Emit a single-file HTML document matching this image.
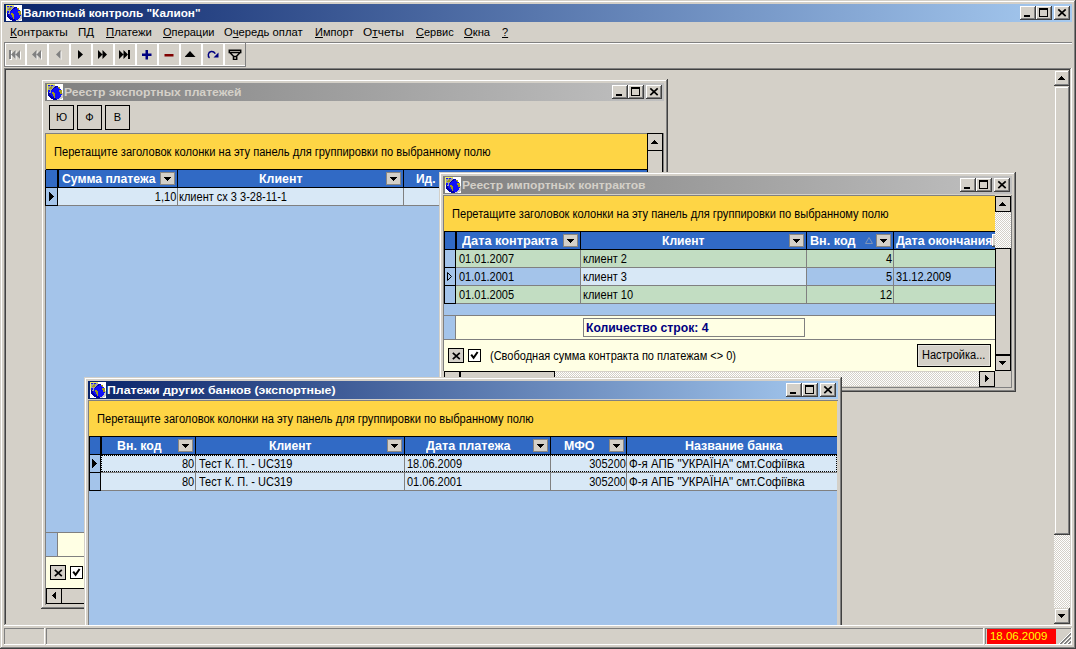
<!DOCTYPE html>
<html><head><meta charset="utf-8"><style>
html,body{margin:0;padding:0;width:1076px;height:649px;overflow:hidden;background:#D4D0C8}
body{position:relative;font-family:"Liberation Sans",sans-serif;font-size:11px}
div,svg{position:absolute}
.t{line-height:13px;white-space:nowrap}
#mdi{left:0;top:0;width:1076px;height:649px;clip-path:inset(70px 22px 24px 6px)}
</style></head><body>
<div style="left:0px;top:0px;width:1076px;height:649px;background:#D4D0C8;"></div>
<div style="left:1px;top:1px;width:1073px;height:1px;background:#FFFFFF;"></div>
<div style="left:1px;top:1px;width:1px;height:646px;background:#FFFFFF;"></div>
<div style="left:0px;top:648px;width:1076px;height:1px;background:#404040;"></div>
<div style="left:1075px;top:0px;width:1px;height:649px;background:#404040;"></div>
<div style="left:1px;top:647px;width:1074px;height:1px;background:#808080;"></div>
<div style="left:1074px;top:1px;width:1px;height:647px;background:#808080;"></div>
<div style="left:4px;top:4px;width:1068px;height:18px;background:linear-gradient(to right,#0A246A,#A6CAF0);"></div>
<svg style="left:6px;top:5px" width="16" height="16" viewBox="0 0 16 16" shape-rendering="crispEdges"><rect x="0" y="0" width="8" height="1" fill="#F0F060"/><rect x="8" y="0" width="8" height="1" fill="#FFFFFF"/><rect x="0" y="1" width="1" height="1" fill="#F0F060"/><rect x="1" y="1" width="2" height="1" fill="#1010F8"/><rect x="3" y="1" width="1" height="1" fill="#A0A0A0"/><rect x="4" y="1" width="2" height="1" fill="#1010F8"/><rect x="6" y="1" width="2" height="1" fill="#A0A0A0"/><rect x="8" y="1" width="8" height="1" fill="#FFFFFF"/><rect x="0" y="2" width="1" height="1" fill="#F0F060"/><rect x="1" y="2" width="3" height="1" fill="#A0A0A0"/><rect x="4" y="2" width="1" height="1" fill="#A09A18"/><rect x="5" y="2" width="3" height="1" fill="#A0A0A0"/><rect x="8" y="2" width="3" height="1" fill="#0000A8"/><rect x="11" y="2" width="5" height="1" fill="#FFFFFF"/><rect x="0" y="3" width="1" height="1" fill="#F0F060"/><rect x="1" y="3" width="2" height="1" fill="#A0A0A0"/><rect x="3" y="3" width="2" height="1" fill="#A09A18"/><rect x="5" y="3" width="2" height="1" fill="#A0A0A0"/><rect x="7" y="3" width="2" height="1" fill="#0000A8"/><rect x="9" y="3" width="2" height="1" fill="#1010F8"/><rect x="11" y="3" width="2" height="1" fill="#A09A18"/><rect x="13" y="3" width="3" height="1" fill="#FFFFFF"/><rect x="0" y="4" width="1" height="1" fill="#F0F060"/><rect x="1" y="4" width="1" height="1" fill="#A0A0A0"/><rect x="2" y="4" width="3" height="1" fill="#A09A18"/><rect x="5" y="4" width="1" height="1" fill="#A0A0A0"/><rect x="6" y="4" width="1" height="1" fill="#0000A8"/><rect x="7" y="4" width="5" height="1" fill="#1010F8"/><rect x="12" y="4" width="1" height="1" fill="#A09A18"/><rect x="13" y="4" width="3" height="1" fill="#FFFFFF"/><rect x="0" y="5" width="1" height="1" fill="#F0F060"/><rect x="1" y="5" width="4" height="1" fill="#A0A0A0"/><rect x="5" y="5" width="1" height="1" fill="#0000A8"/><rect x="6" y="5" width="8" height="1" fill="#1010F8"/><rect x="14" y="5" width="2" height="1" fill="#FFFFFF"/><rect x="0" y="6" width="1" height="1" fill="#F0F060"/><rect x="1" y="6" width="2" height="1" fill="#1010F8"/><rect x="3" y="6" width="1" height="1" fill="#A0A0A0"/><rect x="4" y="6" width="8" height="1" fill="#1010F8"/><rect x="12" y="6" width="3" height="1" fill="#A09A18"/><rect x="15" y="6" width="1" height="1" fill="#FFFFFF"/><rect x="0" y="7" width="1" height="1" fill="#F0F060"/><rect x="1" y="7" width="2" height="1" fill="#1010F8"/><rect x="3" y="7" width="1" height="1" fill="#A0A0A0"/><rect x="4" y="7" width="8" height="1" fill="#1010F8"/><rect x="12" y="7" width="3" height="1" fill="#A09A18"/><rect x="15" y="7" width="1" height="1" fill="#FFFFFF"/><rect x="0" y="8" width="1" height="1" fill="#FFFFFF"/><rect x="1" y="8" width="1" height="1" fill="#0000A8"/><rect x="2" y="8" width="2" height="1" fill="#A0A0A0"/><rect x="4" y="8" width="1" height="1" fill="#1010F8"/><rect x="5" y="8" width="2" height="1" fill="#A09A18"/><rect x="7" y="8" width="6" height="1" fill="#1010F8"/><rect x="13" y="8" width="2" height="1" fill="#A09A18"/><rect x="15" y="8" width="1" height="1" fill="#FFFFFF"/><rect x="0" y="9" width="1" height="1" fill="#FFFFFF"/><rect x="1" y="9" width="2" height="1" fill="#0000A8"/><rect x="3" y="9" width="2" height="1" fill="#1010F8"/><rect x="5" y="9" width="3" height="1" fill="#A09A18"/><rect x="8" y="9" width="5" height="1" fill="#1010F8"/><rect x="13" y="9" width="2" height="1" fill="#A09A18"/><rect x="15" y="9" width="1" height="1" fill="#C8C8C8"/><rect x="0" y="10" width="1" height="1" fill="#FFFFFF"/><rect x="1" y="10" width="2" height="1" fill="#0000A8"/><rect x="3" y="10" width="3" height="1" fill="#1010F8"/><rect x="6" y="10" width="2" height="1" fill="#A09A18"/><rect x="8" y="10" width="7" height="1" fill="#1010F8"/><rect x="15" y="10" width="1" height="1" fill="#C8C8C8"/><rect x="0" y="11" width="1" height="1" fill="#FFFFFF"/><rect x="1" y="11" width="3" height="1" fill="#0000A8"/><rect x="4" y="11" width="2" height="1" fill="#1010F8"/><rect x="6" y="11" width="2" height="1" fill="#A09A18"/><rect x="8" y="11" width="6" height="1" fill="#1010F8"/><rect x="14" y="11" width="2" height="1" fill="#C8C8C8"/><rect x="0" y="12" width="2" height="1" fill="#FFFFFF"/><rect x="2" y="12" width="3" height="1" fill="#0000A8"/><rect x="5" y="12" width="2" height="1" fill="#1010F8"/><rect x="7" y="12" width="1" height="1" fill="#A09A18"/><rect x="8" y="12" width="6" height="1" fill="#1010F8"/><rect x="14" y="12" width="2" height="1" fill="#C8C8C8"/><rect x="0" y="13" width="3" height="1" fill="#FFFFFF"/><rect x="3" y="13" width="4" height="1" fill="#0000A8"/><rect x="7" y="13" width="1" height="1" fill="#A09A18"/><rect x="8" y="13" width="5" height="1" fill="#1010F8"/><rect x="13" y="13" width="3" height="1" fill="#C8C8C8"/><rect x="0" y="14" width="4" height="1" fill="#FFFFFF"/><rect x="4" y="14" width="5" height="1" fill="#0000A8"/><rect x="9" y="14" width="3" height="1" fill="#1010F8"/><rect x="12" y="14" width="3" height="1" fill="#C8C8C8"/><rect x="15" y="14" width="1" height="1" fill="#FFFFFF"/><rect x="0" y="15" width="6" height="1" fill="#FFFFFF"/><rect x="6" y="15" width="4" height="1" fill="#0000A8"/><rect x="10" y="15" width="3" height="1" fill="#C8C8C8"/><rect x="13" y="15" width="3" height="1" fill="#FFFFFF"/></svg>
<div class="t" style="left:23.14px;top:7px;color:#FFFFFF;font-weight:bold;transform:scaleX(1.0692);transform-origin:0 0;">Валютный контроль "Калион"</div>
<div style="left:1020px;top:6px;width:16px;height:14px;background:#D4D0C8;"></div>
<div style="left:1020px;top:6px;width:15px;height:1px;background:#FFFFFF;"></div>
<div style="left:1020px;top:6px;width:1px;height:13px;background:#FFFFFF;"></div>
<div style="left:1020px;top:19px;width:16px;height:1px;background:#404040;"></div>
<div style="left:1035px;top:6px;width:1px;height:14px;background:#404040;"></div>
<div style="left:1021px;top:18px;width:14px;height:1px;background:#808080;"></div>
<div style="left:1034px;top:7px;width:1px;height:12px;background:#808080;"></div>
<div style="left:1024px;top:15px;width:6px;height:2px;background:#000;"></div>
<div style="left:1036px;top:6px;width:16px;height:14px;background:#D4D0C8;"></div>
<div style="left:1036px;top:6px;width:15px;height:1px;background:#FFFFFF;"></div>
<div style="left:1036px;top:6px;width:1px;height:13px;background:#FFFFFF;"></div>
<div style="left:1036px;top:19px;width:16px;height:1px;background:#404040;"></div>
<div style="left:1051px;top:6px;width:1px;height:14px;background:#404040;"></div>
<div style="left:1037px;top:18px;width:14px;height:1px;background:#808080;"></div>
<div style="left:1050px;top:7px;width:1px;height:12px;background:#808080;"></div>
<div style="left:1039px;top:8px;width:9px;height:9px;border:1px solid #000;border-top-width:2px;box-sizing:border-box"></div>
<div style="left:1054px;top:6px;width:16px;height:14px;background:#D4D0C8;"></div>
<div style="left:1054px;top:6px;width:15px;height:1px;background:#FFFFFF;"></div>
<div style="left:1054px;top:6px;width:1px;height:13px;background:#FFFFFF;"></div>
<div style="left:1054px;top:19px;width:16px;height:1px;background:#404040;"></div>
<div style="left:1069px;top:6px;width:1px;height:14px;background:#404040;"></div>
<div style="left:1055px;top:18px;width:14px;height:1px;background:#808080;"></div>
<div style="left:1068px;top:7px;width:1px;height:12px;background:#808080;"></div>
<svg style="left:1057px;top:8px" width="10" height="9" viewBox="0 0 10 9"><path d="M1.3 1.3L8.7 8.2M8.7 1.3L1.3 8.2" stroke="#000" stroke-width="1.7"/></svg>
<div class="t" style="left:10px;top:26px;color:#000;transform:scaleX(1.075);transform-origin:0 0;"><u>К</u>онтракты</div>
<div class="t" style="left:78px;top:26px;color:#000;transform:scaleX(1.05);transform-origin:0 0;">П<u>Д</u></div>
<div class="t" style="left:106px;top:26px;color:#000;transform:scaleX(1.03);transform-origin:0 0;"><u>П</u>латежи</div>
<div class="t" style="left:163px;top:26px;color:#000;"><u>О</u>перации</div>
<div class="t" style="left:224px;top:26px;color:#000;transform:scaleX(1.02);transform-origin:0 0;">О<u>ч</u>ередь оплат</div>
<div class="t" style="left:315px;top:26px;color:#000;"><u>И</u>мпорт</div>
<div class="t" style="left:363px;top:26px;color:#000;transform:scaleX(1.08);transform-origin:0 0;">О<u>т</u>четы</div>
<div class="t" style="left:416px;top:26px;color:#000;"><u>С</u>ервис</div>
<div class="t" style="left:464px;top:26px;color:#000;transform:scaleX(1.02);transform-origin:0 0;"><u>О</u>кна</div>
<div class="t" style="left:502px;top:26px;color:#000;"><u>?</u></div>
<div style="left:4px;top:42px;width:1068px;height:1px;background:#808080;"></div>
<div style="left:4px;top:43px;width:1068px;height:1px;background:#FFFFFF;"></div>
<div style="left:4px;top:42px;width:242px;height:25px;background:#808080;"></div>
<div style="left:5px;top:43px;width:240px;height:23px;background:#FFFFFF;"></div>
<div style="left:6px;top:44px;width:19px;height:21px;background:#D4D0C8;"></div>
<div style="left:27px;top:44px;width:20px;height:21px;background:#D4D0C8;"></div>
<div style="left:49px;top:44px;width:20px;height:21px;background:#D4D0C8;"></div>
<div style="left:71px;top:44px;width:20px;height:21px;background:#D4D0C8;"></div>
<div style="left:93px;top:44px;width:20px;height:21px;background:#D4D0C8;"></div>
<div style="left:115px;top:44px;width:20px;height:21px;background:#D4D0C8;"></div>
<div style="left:137px;top:44px;width:20px;height:21px;background:#D4D0C8;"></div>
<div style="left:159px;top:44px;width:20px;height:21px;background:#D4D0C8;"></div>
<div style="left:181px;top:44px;width:20px;height:21px;background:#D4D0C8;"></div>
<div style="left:203px;top:44px;width:20px;height:21px;background:#D4D0C8;"></div>
<div style="left:225px;top:44px;width:20px;height:21px;background:#D4D0C8;"></div>
<svg style="left:9px;top:50px" width="13" height="11" viewBox="0 0 13 11"><path transform="translate(1,1)" d="M0 0h2v9h-2zM2 4.5L6.5 0V9zM6.5 4.5L11 0V9z" fill="#fff"/><path d="M0 0h2v9h-2zM2 4.5L6.5 0V9zM6.5 4.5L11 0V9z" fill="#808080"/></svg>
<svg style="left:32px;top:50px" width="12" height="11" viewBox="0 0 12 11"><path transform="translate(1,1)" d="M0 4.5L4.5 0V9zM4.5 4.5L9 0V9z" fill="#fff"/><path d="M0 4.5L4.5 0V9zM4.5 4.5L9 0V9z" fill="#808080"/></svg>
<svg style="left:56px;top:50px" width="8" height="11" viewBox="0 0 8 11"><path transform="translate(1,1)" d="M0 4.5L4.5 0V9z" fill="#fff"/><path d="M0 4.5L4.5 0V9z" fill="#808080"/></svg>
<svg style="left:78px;top:50px" width="8" height="11" viewBox="0 0 8 11"><path d="M0 0L5 4.5L0 9z" fill="#000"/></svg>
<svg style="left:98px;top:50px" width="12" height="11" viewBox="0 0 12 11"><path d="M0 0L4.5 4.5L0 9zM4.5 0L9 4.5L4.5 9z" fill="#000"/></svg>
<svg style="left:119px;top:50px" width="12" height="11" viewBox="0 0 12 11"><path d="M0 0L4.5 4.5L0 9zM4.5 0L9 4.5L4.5 9zM9 0h2v9h-2z" fill="#000"/></svg>
<svg style="left:142px;top:50px" width="10" height="10" viewBox="0 0 10 10"><path d="M3.5 0h2.5v3.5h3.5v2.5h-3.5v3.5h-2.5v-3.5h-3.5v-2.5h3.5z" fill="#000080"/></svg>
<svg style="left:164px;top:53px" width="10" height="4" viewBox="0 0 10 4"><path d="M0.5 1h9v2.5h-9z" fill="#800000"/></svg>
<svg style="left:185px;top:51px" width="11" height="7" viewBox="0 0 11 7"><path d="M5 0L10.5 6h-11z" fill="#000"/></svg>
<svg style="left:207px;top:50px" width="12" height="9" viewBox="0 0 12 9"><path d="M2.5 7.8C0.6 6.5 0.8 2.2 4.2 1.6C6 1.3 7.3 2.2 8.3 3.6" fill="none" stroke="#000080" stroke-width="1.5"/></svg>
<svg style="left:212px;top:52px" width="7" height="6" viewBox="0 0 7 6"><path d="M6.5 0.5v5h-5z" fill="#000080"/></svg>
<svg style="left:228px;top:49px" width="14" height="11" viewBox="0 0 14 11"><path d="M1.3 1.3h11.4v2.2h-11.4zM1.8 3.5l4.2 4.2M12.2 3.5l-4.2 4.2M5.5 7.5h3.2v3h-3.2z" fill="none" stroke="#000" stroke-width="1.5"/></svg>
<div style="left:4px;top:68px;width:1068px;height:558px;background:#D4D0C8;"></div>
<div style="left:4px;top:68px;width:1067px;height:1px;background:#808080;"></div>
<div style="left:4px;top:68px;width:1px;height:557px;background:#808080;"></div>
<div style="left:5px;top:69px;width:1065px;height:1px;background:#404040;"></div>
<div style="left:5px;top:69px;width:1px;height:555px;background:#404040;"></div>
<div style="left:4px;top:625px;width:1068px;height:1px;background:#FFFFFF;"></div>
<div style="left:1071px;top:68px;width:1px;height:558px;background:#FFFFFF;"></div>
<div style="left:1054px;top:70px;width:16px;height:555px;background:#D4D0C8;"></div>
<div style="left:1054px;top:70px;width:16px;height:16px;background:#D4D0C8;"></div>
<div style="left:1055px;top:71px;width:13px;height:1px;background:#FFFFFF;"></div>
<div style="left:1055px;top:71px;width:1px;height:13px;background:#FFFFFF;"></div>
<div style="left:1054px;top:85px;width:16px;height:1px;background:#404040;"></div>
<div style="left:1069px;top:70px;width:1px;height:16px;background:#404040;"></div>
<div style="left:1055px;top:84px;width:14px;height:1px;background:#808080;"></div>
<div style="left:1068px;top:71px;width:1px;height:14px;background:#808080;"></div>
<svg style="left:1058px;top:76px" width="7" height="4" viewBox="0 0 7 4" shape-rendering="crispEdges"><path d="M3 0h1v1h1v1h1v1h1v1h-7v-1h1v-1h1v-1h1z" fill="#000"/></svg>
<div style="left:1054px;top:86px;width:16px;height:449px;background:#D4D0C8;"></div>
<div style="left:1055px;top:87px;width:13px;height:1px;background:#FFFFFF;"></div>
<div style="left:1055px;top:87px;width:1px;height:446px;background:#FFFFFF;"></div>
<div style="left:1054px;top:534px;width:16px;height:1px;background:#404040;"></div>
<div style="left:1069px;top:86px;width:1px;height:449px;background:#404040;"></div>
<div style="left:1055px;top:533px;width:14px;height:1px;background:#808080;"></div>
<div style="left:1068px;top:87px;width:1px;height:447px;background:#808080;"></div>
<div style="left:1054px;top:535px;width:16px;height:73px;background:#fff;background-image:repeating-conic-gradient(#D4D0C8 0 25%, #fff 0 50%);background-size:2px 2px;"></div>
<div style="left:1054px;top:608px;width:16px;height:16px;background:#D4D0C8;"></div>
<div style="left:1055px;top:609px;width:13px;height:1px;background:#FFFFFF;"></div>
<div style="left:1055px;top:609px;width:1px;height:13px;background:#FFFFFF;"></div>
<div style="left:1054px;top:623px;width:16px;height:1px;background:#404040;"></div>
<div style="left:1069px;top:608px;width:1px;height:16px;background:#404040;"></div>
<div style="left:1055px;top:622px;width:14px;height:1px;background:#808080;"></div>
<div style="left:1068px;top:609px;width:1px;height:14px;background:#808080;"></div>
<svg style="left:1058px;top:614px" width="7" height="4" viewBox="0 0 7 4" shape-rendering="crispEdges"><path d="M0 0h7v1h-1v1h-1v1h-1v1h-1v-1h-1v-1h-1v-1h-1z" fill="#000"/></svg>
<div style="left:4px;top:628px;width:41px;height:17px;background:#D4D0C8;"></div>
<div style="left:4px;top:628px;width:41px;height:1px;background:#808080;"></div>
<div style="left:4px;top:628px;width:1px;height:17px;background:#808080;"></div>
<div style="left:4px;top:644px;width:41px;height:1px;background:#FFFFFF;"></div>
<div style="left:44px;top:628px;width:1px;height:17px;background:#FFFFFF;"></div>
<div style="left:46px;top:628px;width:938px;height:17px;background:#D4D0C8;"></div>
<div style="left:46px;top:628px;width:938px;height:1px;background:#808080;"></div>
<div style="left:46px;top:628px;width:1px;height:17px;background:#808080;"></div>
<div style="left:46px;top:644px;width:938px;height:1px;background:#FFFFFF;"></div>
<div style="left:983px;top:628px;width:1px;height:17px;background:#FFFFFF;"></div>
<div style="left:985px;top:628px;width:87px;height:17px;background:#D4D0C8;"></div>
<div style="left:985px;top:628px;width:87px;height:1px;background:#808080;"></div>
<div style="left:985px;top:628px;width:1px;height:17px;background:#808080;"></div>
<div style="left:985px;top:644px;width:87px;height:1px;background:#FFFFFF;"></div>
<div style="left:1071px;top:628px;width:1px;height:17px;background:#FFFFFF;"></div>
<div style="left:987px;top:629px;width:69px;height:15px;background:#FF0000;"></div>
<div class="t" style="left:990px;top:630px;color:#FFFF00;transform:scaleX(1.04);transform-origin:0 0;">18.06.2009</div>
<svg style="left:1059px;top:632px" width="13" height="13" viewBox="0 0 13 13"><path d="M12 0L0 12M12 4L4 12M12 8L8 12" stroke="#fff" stroke-width="1"/><path d="M12 1L1 12M12 2L2 12M12 5L5 12M12 6L6 12M12 9L9 12M12 10L10 12" stroke="#808080" stroke-width="1"/></svg>
<div id="mdi">
<div style="left:41px;top:79px;width:627px;height:530px;background:#D4D0C8;"></div>
<div style="left:42px;top:80px;width:624px;height:1px;background:#FFFFFF;"></div>
<div style="left:42px;top:80px;width:1px;height:527px;background:#FFFFFF;"></div>
<div style="left:41px;top:608px;width:627px;height:1px;background:#404040;"></div>
<div style="left:667px;top:79px;width:1px;height:530px;background:#404040;"></div>
<div style="left:42px;top:607px;width:625px;height:1px;background:#808080;"></div>
<div style="left:666px;top:80px;width:1px;height:528px;background:#808080;"></div>
<div style="left:45px;top:83px;width:619px;height:18px;background:linear-gradient(to right,#808080,#C0C0C0);"></div>
<svg style="left:47px;top:84px" width="16" height="16" viewBox="0 0 16 16" shape-rendering="crispEdges"><rect x="0" y="0" width="8" height="1" fill="#F0F060"/><rect x="8" y="0" width="8" height="1" fill="#FFFFFF"/><rect x="0" y="1" width="1" height="1" fill="#F0F060"/><rect x="1" y="1" width="2" height="1" fill="#1010F8"/><rect x="3" y="1" width="1" height="1" fill="#A0A0A0"/><rect x="4" y="1" width="2" height="1" fill="#1010F8"/><rect x="6" y="1" width="2" height="1" fill="#A0A0A0"/><rect x="8" y="1" width="8" height="1" fill="#FFFFFF"/><rect x="0" y="2" width="1" height="1" fill="#F0F060"/><rect x="1" y="2" width="3" height="1" fill="#A0A0A0"/><rect x="4" y="2" width="1" height="1" fill="#A09A18"/><rect x="5" y="2" width="3" height="1" fill="#A0A0A0"/><rect x="8" y="2" width="3" height="1" fill="#0000A8"/><rect x="11" y="2" width="5" height="1" fill="#FFFFFF"/><rect x="0" y="3" width="1" height="1" fill="#F0F060"/><rect x="1" y="3" width="2" height="1" fill="#A0A0A0"/><rect x="3" y="3" width="2" height="1" fill="#A09A18"/><rect x="5" y="3" width="2" height="1" fill="#A0A0A0"/><rect x="7" y="3" width="2" height="1" fill="#0000A8"/><rect x="9" y="3" width="2" height="1" fill="#1010F8"/><rect x="11" y="3" width="2" height="1" fill="#A09A18"/><rect x="13" y="3" width="3" height="1" fill="#FFFFFF"/><rect x="0" y="4" width="1" height="1" fill="#F0F060"/><rect x="1" y="4" width="1" height="1" fill="#A0A0A0"/><rect x="2" y="4" width="3" height="1" fill="#A09A18"/><rect x="5" y="4" width="1" height="1" fill="#A0A0A0"/><rect x="6" y="4" width="1" height="1" fill="#0000A8"/><rect x="7" y="4" width="5" height="1" fill="#1010F8"/><rect x="12" y="4" width="1" height="1" fill="#A09A18"/><rect x="13" y="4" width="3" height="1" fill="#FFFFFF"/><rect x="0" y="5" width="1" height="1" fill="#F0F060"/><rect x="1" y="5" width="4" height="1" fill="#A0A0A0"/><rect x="5" y="5" width="1" height="1" fill="#0000A8"/><rect x="6" y="5" width="8" height="1" fill="#1010F8"/><rect x="14" y="5" width="2" height="1" fill="#FFFFFF"/><rect x="0" y="6" width="1" height="1" fill="#F0F060"/><rect x="1" y="6" width="2" height="1" fill="#1010F8"/><rect x="3" y="6" width="1" height="1" fill="#A0A0A0"/><rect x="4" y="6" width="8" height="1" fill="#1010F8"/><rect x="12" y="6" width="3" height="1" fill="#A09A18"/><rect x="15" y="6" width="1" height="1" fill="#FFFFFF"/><rect x="0" y="7" width="1" height="1" fill="#F0F060"/><rect x="1" y="7" width="2" height="1" fill="#1010F8"/><rect x="3" y="7" width="1" height="1" fill="#A0A0A0"/><rect x="4" y="7" width="8" height="1" fill="#1010F8"/><rect x="12" y="7" width="3" height="1" fill="#A09A18"/><rect x="15" y="7" width="1" height="1" fill="#FFFFFF"/><rect x="0" y="8" width="1" height="1" fill="#FFFFFF"/><rect x="1" y="8" width="1" height="1" fill="#0000A8"/><rect x="2" y="8" width="2" height="1" fill="#A0A0A0"/><rect x="4" y="8" width="1" height="1" fill="#1010F8"/><rect x="5" y="8" width="2" height="1" fill="#A09A18"/><rect x="7" y="8" width="6" height="1" fill="#1010F8"/><rect x="13" y="8" width="2" height="1" fill="#A09A18"/><rect x="15" y="8" width="1" height="1" fill="#FFFFFF"/><rect x="0" y="9" width="1" height="1" fill="#FFFFFF"/><rect x="1" y="9" width="2" height="1" fill="#0000A8"/><rect x="3" y="9" width="2" height="1" fill="#1010F8"/><rect x="5" y="9" width="3" height="1" fill="#A09A18"/><rect x="8" y="9" width="5" height="1" fill="#1010F8"/><rect x="13" y="9" width="2" height="1" fill="#A09A18"/><rect x="15" y="9" width="1" height="1" fill="#C8C8C8"/><rect x="0" y="10" width="1" height="1" fill="#FFFFFF"/><rect x="1" y="10" width="2" height="1" fill="#0000A8"/><rect x="3" y="10" width="3" height="1" fill="#1010F8"/><rect x="6" y="10" width="2" height="1" fill="#A09A18"/><rect x="8" y="10" width="7" height="1" fill="#1010F8"/><rect x="15" y="10" width="1" height="1" fill="#C8C8C8"/><rect x="0" y="11" width="1" height="1" fill="#FFFFFF"/><rect x="1" y="11" width="3" height="1" fill="#0000A8"/><rect x="4" y="11" width="2" height="1" fill="#1010F8"/><rect x="6" y="11" width="2" height="1" fill="#A09A18"/><rect x="8" y="11" width="6" height="1" fill="#1010F8"/><rect x="14" y="11" width="2" height="1" fill="#C8C8C8"/><rect x="0" y="12" width="2" height="1" fill="#FFFFFF"/><rect x="2" y="12" width="3" height="1" fill="#0000A8"/><rect x="5" y="12" width="2" height="1" fill="#1010F8"/><rect x="7" y="12" width="1" height="1" fill="#A09A18"/><rect x="8" y="12" width="6" height="1" fill="#1010F8"/><rect x="14" y="12" width="2" height="1" fill="#C8C8C8"/><rect x="0" y="13" width="3" height="1" fill="#FFFFFF"/><rect x="3" y="13" width="4" height="1" fill="#0000A8"/><rect x="7" y="13" width="1" height="1" fill="#A09A18"/><rect x="8" y="13" width="5" height="1" fill="#1010F8"/><rect x="13" y="13" width="3" height="1" fill="#C8C8C8"/><rect x="0" y="14" width="4" height="1" fill="#FFFFFF"/><rect x="4" y="14" width="5" height="1" fill="#0000A8"/><rect x="9" y="14" width="3" height="1" fill="#1010F8"/><rect x="12" y="14" width="3" height="1" fill="#C8C8C8"/><rect x="15" y="14" width="1" height="1" fill="#FFFFFF"/><rect x="0" y="15" width="6" height="1" fill="#FFFFFF"/><rect x="6" y="15" width="4" height="1" fill="#0000A8"/><rect x="10" y="15" width="3" height="1" fill="#C8C8C8"/><rect x="13" y="15" width="3" height="1" fill="#FFFFFF"/></svg>
<div class="t" style="left:64.11px;top:86px;color:#D4D0C8;font-weight:bold;transform:scaleX(1.1082);transform-origin:0 0;">Реестр экспортных платежей</div>
<div style="left:612px;top:85px;width:16px;height:14px;background:#D4D0C8;"></div>
<div style="left:612px;top:85px;width:15px;height:1px;background:#FFFFFF;"></div>
<div style="left:612px;top:85px;width:1px;height:13px;background:#FFFFFF;"></div>
<div style="left:612px;top:98px;width:16px;height:1px;background:#404040;"></div>
<div style="left:627px;top:85px;width:1px;height:14px;background:#404040;"></div>
<div style="left:613px;top:97px;width:14px;height:1px;background:#808080;"></div>
<div style="left:626px;top:86px;width:1px;height:12px;background:#808080;"></div>
<div style="left:616px;top:94px;width:6px;height:2px;background:#000;"></div>
<div style="left:628px;top:85px;width:16px;height:14px;background:#D4D0C8;"></div>
<div style="left:628px;top:85px;width:15px;height:1px;background:#FFFFFF;"></div>
<div style="left:628px;top:85px;width:1px;height:13px;background:#FFFFFF;"></div>
<div style="left:628px;top:98px;width:16px;height:1px;background:#404040;"></div>
<div style="left:643px;top:85px;width:1px;height:14px;background:#404040;"></div>
<div style="left:629px;top:97px;width:14px;height:1px;background:#808080;"></div>
<div style="left:642px;top:86px;width:1px;height:12px;background:#808080;"></div>
<div style="left:631px;top:87px;width:9px;height:9px;border:1px solid #000;border-top-width:2px;box-sizing:border-box"></div>
<div style="left:646px;top:85px;width:16px;height:14px;background:#D4D0C8;"></div>
<div style="left:646px;top:85px;width:15px;height:1px;background:#FFFFFF;"></div>
<div style="left:646px;top:85px;width:1px;height:13px;background:#FFFFFF;"></div>
<div style="left:646px;top:98px;width:16px;height:1px;background:#404040;"></div>
<div style="left:661px;top:85px;width:1px;height:14px;background:#404040;"></div>
<div style="left:647px;top:97px;width:14px;height:1px;background:#808080;"></div>
<div style="left:660px;top:86px;width:1px;height:12px;background:#808080;"></div>
<svg style="left:649px;top:87px" width="10" height="9" viewBox="0 0 10 9"><path d="M1.3 1.3L8.7 8.2M8.7 1.3L1.3 8.2" stroke="#000" stroke-width="1.7"/></svg>
<div style="left:49px;top:105px;width:25px;height:25px;background:#D4D0C8;box-shadow: inset 0 0 0 1px #000;"></div>
<div class="t" style="left:49px;top:111px;color:#000;width:25px;text-align:center;">Ю</div>
<div style="left:77px;top:105px;width:25px;height:25px;background:#D4D0C8;box-shadow: inset 0 0 0 1px #000;"></div>
<div class="t" style="left:77px;top:111px;color:#000;width:25px;text-align:center;">Ф</div>
<div style="left:105px;top:105px;width:25px;height:25px;background:#D4D0C8;box-shadow: inset 0 0 0 1px #000;"></div>
<div class="t" style="left:105px;top:111px;color:#000;width:25px;text-align:center;">В</div>
<div style="left:45px;top:133px;width:602px;height:1px;background:#808080;"></div>
<div style="left:45px;top:133px;width:1px;height:472px;background:#808080;"></div>
<div style="left:46px;top:134px;width:601px;height:35px;background:#FED545;"></div>
<div class="t" style="left:54px;top:146px;color:#000;font-size:12px;transform:scaleX(0.9255);transform-origin:0 0;">Перетащите заголовок колонки на эту панель для группировки по выбранному полю</div>
<div style="left:46px;top:169px;width:601px;height:1px;background:#000;"></div>
<div style="left:46px;top:170px;width:601px;height:17px;background:#316AC5;"></div>
<div style="left:57px;top:170px;width:2px;height:17px;background:#000;"></div>
<div style="left:46px;top:187px;width:601px;height:1px;background:#000;"></div>
<div style="left:45px;top:170px;width:1px;height:36px;background:#000;"></div>
<div class="t" style="left:62.19px;top:173px;color:#fff;font-size:12px;font-weight:bold;transform:scaleX(1.0156);transform-origin:0 0;">Сумма платежа</div>
<div style="left:160px;top:172px;width:15px;height:13px;background:#D4D0C8;box-shadow: inset 0 0 0 1px #8A8680;"></div>
<svg style="left:164px;top:177px" width="7" height="4" viewBox="0 0 7 4" shape-rendering="crispEdges"><path d="M0 0h7v1h-1v1h-1v1h-1v1h-1v-1h-1v-1h-1v-1h-1z" fill="#000"/></svg>
<div style="left:177px;top:170px;width:1px;height:17px;background:#000;"></div>
<div class="t" style="left:259.17px;top:173px;color:#fff;font-size:12px;font-weight:bold;transform:scaleX(1.0326);transform-origin:0 0;">Клиент</div>
<div style="left:386px;top:172px;width:15px;height:13px;background:#D4D0C8;box-shadow: inset 0 0 0 1px #8A8680;"></div>
<svg style="left:390px;top:177px" width="7" height="4" viewBox="0 0 7 4" shape-rendering="crispEdges"><path d="M0 0h7v1h-1v1h-1v1h-1v1h-1v-1h-1v-1h-1v-1h-1z" fill="#000"/></svg>
<div style="left:403px;top:170px;width:1px;height:17px;background:#000;"></div>
<div class="t" style="left:416.2px;top:173px;color:#fff;font-size:12px;font-weight:bold;transform:scaleX(0.996);transform-origin:0 0;">Ид.</div>
<div style="left:46px;top:188px;width:11px;height:17px;background:#A4C4EA;"></div>
<div style="left:57px;top:188px;width:1px;height:18px;background:#000;"></div>
<div style="left:58px;top:188px;width:589px;height:17px;background:#D8E8F6;"></div>
<div style="left:46px;top:205px;width:601px;height:1px;background:#808080;"></div>
<div style="left:45px;top:205px;width:13px;height:1px;background:#000;"></div>
<div style="left:177px;top:188px;width:1px;height:17px;background:#808080;"></div>
<div style="left:403px;top:188px;width:1px;height:17px;background:#808080;"></div>
<svg style="left:49px;top:192px" width="5" height="9" viewBox="0 0 5 9" shape-rendering="crispEdges"><path d="M0 0v9h1v-1h1v-1h1v-1h1v-1h1v-1h-1v-1h-1v-1h-1v-1h-1v-1z" fill="#000"/></svg>
<div class="t" style="left:124.75px;top:191px;color:#000;font-size:12px;transform:scaleX(0.917);transform-origin:100% 0;width:51.25px;text-align:right;">1,10</div>
<div class="t" style="left:179px;top:191px;color:#000;font-size:12px;transform:scaleX(0.917);transform-origin:0 0;">клиент сх 3 3-28-11-1</div>
<div style="left:46px;top:206px;width:601px;height:326px;background:#A4C4EA;"></div>
<div style="left:46px;top:532px;width:601px;height:1px;background:#808080;"></div>
<div style="left:46px;top:533px;width:11px;height:23px;background:#A4C4EA;"></div>
<div style="left:57px;top:533px;width:1px;height:23px;background:#808080;"></div>
<div style="left:58px;top:533px;width:589px;height:23px;background:#FFFFE4;"></div>
<div style="left:46px;top:556px;width:601px;height:1px;background:#808080;"></div>
<div style="left:46px;top:557px;width:601px;height:31px;background:#FFFFE4;"></div>
<div style="left:50px;top:565px;width:16px;height:15px;background:#D4D0C8;box-shadow: inset 0 0 0 1px #000;"></div>
<svg style="left:53.5px;top:568.5px" width="9" height="8" viewBox="0 0 9 8"><path d="M0.8 0.8L7.8 7.2M7.8 0.8L0.8 7.2" stroke="#000" stroke-width="1.7"/></svg>
<div style="left:70px;top:566px;width:13px;height:13px;background:#fff;box-shadow: inset 0 0 0 1px #000;"></div>
<svg style="left:72px;top:568px" width="9" height="9" viewBox="0 0 9 9"><path d="M1.2 3.6L3.6 6.8L7.6 1" stroke="#000" stroke-width="2" fill="none"/></svg>
<div style="left:46px;top:588px;width:601px;height:16px;background:#D4D0C8;box-shadow: inset 0 0 0 1px #000;"></div>
<div style="left:46px;top:588px;width:16px;height:16px;background:#D4D0C8;box-shadow: inset 0 0 0 1px #000;"></div>
<svg style="left:52px;top:592px" width="4" height="7" viewBox="0 0 4 7" shape-rendering="crispEdges"><path d="M4 0v7h-1v-1h-1v-1h-1v-1h-1v-1h1v-1h1v-1h1v-1z" fill="#000"/></svg>
<div style="left:61px;top:588px;width:200px;height:16px;background:#D4D0C8;box-shadow: inset 0 0 0 1px #000;"></div>
<div style="left:647px;top:133px;width:16px;height:455px;background:#D4D0C8;box-shadow: inset 0 0 0 1px #000;"></div>
<div style="left:647px;top:149px;width:16px;height:439px;background:#D4D0C8;box-shadow: inset 0 0 0 1px #000;"></div>
<div style="left:647px;top:133px;width:16px;height:18px;background:#D4D0C8;box-shadow: inset 0 0 0 1px #000;"></div>
<svg style="left:651px;top:140px" width="7" height="4" viewBox="0 0 7 4" shape-rendering="crispEdges"><path d="M3 0h1v1h1v1h1v1h1v1h-7v-1h1v-1h1v-1h1z" fill="#000"/></svg>
<div style="left:663px;top:133px;width:1px;height:475px;background:#808080;"></div>
<div style="left:439px;top:172px;width:577px;height:220px;background:#D4D0C8;"></div>
<div style="left:440px;top:173px;width:574px;height:1px;background:#FFFFFF;"></div>
<div style="left:440px;top:173px;width:1px;height:217px;background:#FFFFFF;"></div>
<div style="left:439px;top:391px;width:577px;height:1px;background:#404040;"></div>
<div style="left:1015px;top:172px;width:1px;height:220px;background:#404040;"></div>
<div style="left:440px;top:390px;width:575px;height:1px;background:#808080;"></div>
<div style="left:1014px;top:173px;width:1px;height:218px;background:#808080;"></div>
<div style="left:443px;top:176px;width:569px;height:18px;background:linear-gradient(to right,#808080,#C0C0C0);"></div>
<svg style="left:445px;top:177px" width="16" height="16" viewBox="0 0 16 16" shape-rendering="crispEdges"><rect x="0" y="0" width="8" height="1" fill="#F0F060"/><rect x="8" y="0" width="8" height="1" fill="#FFFFFF"/><rect x="0" y="1" width="1" height="1" fill="#F0F060"/><rect x="1" y="1" width="2" height="1" fill="#1010F8"/><rect x="3" y="1" width="1" height="1" fill="#A0A0A0"/><rect x="4" y="1" width="2" height="1" fill="#1010F8"/><rect x="6" y="1" width="2" height="1" fill="#A0A0A0"/><rect x="8" y="1" width="8" height="1" fill="#FFFFFF"/><rect x="0" y="2" width="1" height="1" fill="#F0F060"/><rect x="1" y="2" width="3" height="1" fill="#A0A0A0"/><rect x="4" y="2" width="1" height="1" fill="#A09A18"/><rect x="5" y="2" width="3" height="1" fill="#A0A0A0"/><rect x="8" y="2" width="3" height="1" fill="#0000A8"/><rect x="11" y="2" width="5" height="1" fill="#FFFFFF"/><rect x="0" y="3" width="1" height="1" fill="#F0F060"/><rect x="1" y="3" width="2" height="1" fill="#A0A0A0"/><rect x="3" y="3" width="2" height="1" fill="#A09A18"/><rect x="5" y="3" width="2" height="1" fill="#A0A0A0"/><rect x="7" y="3" width="2" height="1" fill="#0000A8"/><rect x="9" y="3" width="2" height="1" fill="#1010F8"/><rect x="11" y="3" width="2" height="1" fill="#A09A18"/><rect x="13" y="3" width="3" height="1" fill="#FFFFFF"/><rect x="0" y="4" width="1" height="1" fill="#F0F060"/><rect x="1" y="4" width="1" height="1" fill="#A0A0A0"/><rect x="2" y="4" width="3" height="1" fill="#A09A18"/><rect x="5" y="4" width="1" height="1" fill="#A0A0A0"/><rect x="6" y="4" width="1" height="1" fill="#0000A8"/><rect x="7" y="4" width="5" height="1" fill="#1010F8"/><rect x="12" y="4" width="1" height="1" fill="#A09A18"/><rect x="13" y="4" width="3" height="1" fill="#FFFFFF"/><rect x="0" y="5" width="1" height="1" fill="#F0F060"/><rect x="1" y="5" width="4" height="1" fill="#A0A0A0"/><rect x="5" y="5" width="1" height="1" fill="#0000A8"/><rect x="6" y="5" width="8" height="1" fill="#1010F8"/><rect x="14" y="5" width="2" height="1" fill="#FFFFFF"/><rect x="0" y="6" width="1" height="1" fill="#F0F060"/><rect x="1" y="6" width="2" height="1" fill="#1010F8"/><rect x="3" y="6" width="1" height="1" fill="#A0A0A0"/><rect x="4" y="6" width="8" height="1" fill="#1010F8"/><rect x="12" y="6" width="3" height="1" fill="#A09A18"/><rect x="15" y="6" width="1" height="1" fill="#FFFFFF"/><rect x="0" y="7" width="1" height="1" fill="#F0F060"/><rect x="1" y="7" width="2" height="1" fill="#1010F8"/><rect x="3" y="7" width="1" height="1" fill="#A0A0A0"/><rect x="4" y="7" width="8" height="1" fill="#1010F8"/><rect x="12" y="7" width="3" height="1" fill="#A09A18"/><rect x="15" y="7" width="1" height="1" fill="#FFFFFF"/><rect x="0" y="8" width="1" height="1" fill="#FFFFFF"/><rect x="1" y="8" width="1" height="1" fill="#0000A8"/><rect x="2" y="8" width="2" height="1" fill="#A0A0A0"/><rect x="4" y="8" width="1" height="1" fill="#1010F8"/><rect x="5" y="8" width="2" height="1" fill="#A09A18"/><rect x="7" y="8" width="6" height="1" fill="#1010F8"/><rect x="13" y="8" width="2" height="1" fill="#A09A18"/><rect x="15" y="8" width="1" height="1" fill="#FFFFFF"/><rect x="0" y="9" width="1" height="1" fill="#FFFFFF"/><rect x="1" y="9" width="2" height="1" fill="#0000A8"/><rect x="3" y="9" width="2" height="1" fill="#1010F8"/><rect x="5" y="9" width="3" height="1" fill="#A09A18"/><rect x="8" y="9" width="5" height="1" fill="#1010F8"/><rect x="13" y="9" width="2" height="1" fill="#A09A18"/><rect x="15" y="9" width="1" height="1" fill="#C8C8C8"/><rect x="0" y="10" width="1" height="1" fill="#FFFFFF"/><rect x="1" y="10" width="2" height="1" fill="#0000A8"/><rect x="3" y="10" width="3" height="1" fill="#1010F8"/><rect x="6" y="10" width="2" height="1" fill="#A09A18"/><rect x="8" y="10" width="7" height="1" fill="#1010F8"/><rect x="15" y="10" width="1" height="1" fill="#C8C8C8"/><rect x="0" y="11" width="1" height="1" fill="#FFFFFF"/><rect x="1" y="11" width="3" height="1" fill="#0000A8"/><rect x="4" y="11" width="2" height="1" fill="#1010F8"/><rect x="6" y="11" width="2" height="1" fill="#A09A18"/><rect x="8" y="11" width="6" height="1" fill="#1010F8"/><rect x="14" y="11" width="2" height="1" fill="#C8C8C8"/><rect x="0" y="12" width="2" height="1" fill="#FFFFFF"/><rect x="2" y="12" width="3" height="1" fill="#0000A8"/><rect x="5" y="12" width="2" height="1" fill="#1010F8"/><rect x="7" y="12" width="1" height="1" fill="#A09A18"/><rect x="8" y="12" width="6" height="1" fill="#1010F8"/><rect x="14" y="12" width="2" height="1" fill="#C8C8C8"/><rect x="0" y="13" width="3" height="1" fill="#FFFFFF"/><rect x="3" y="13" width="4" height="1" fill="#0000A8"/><rect x="7" y="13" width="1" height="1" fill="#A09A18"/><rect x="8" y="13" width="5" height="1" fill="#1010F8"/><rect x="13" y="13" width="3" height="1" fill="#C8C8C8"/><rect x="0" y="14" width="4" height="1" fill="#FFFFFF"/><rect x="4" y="14" width="5" height="1" fill="#0000A8"/><rect x="9" y="14" width="3" height="1" fill="#1010F8"/><rect x="12" y="14" width="3" height="1" fill="#C8C8C8"/><rect x="15" y="14" width="1" height="1" fill="#FFFFFF"/><rect x="0" y="15" width="6" height="1" fill="#FFFFFF"/><rect x="6" y="15" width="4" height="1" fill="#0000A8"/><rect x="10" y="15" width="3" height="1" fill="#C8C8C8"/><rect x="13" y="15" width="3" height="1" fill="#FFFFFF"/></svg>
<div class="t" style="left:462.12px;top:179px;color:#D4D0C8;font-weight:bold;transform:scaleX(1.0985);transform-origin:0 0;">Реестр импортных контрактов</div>
<div style="left:960px;top:178px;width:16px;height:14px;background:#D4D0C8;"></div>
<div style="left:960px;top:178px;width:15px;height:1px;background:#FFFFFF;"></div>
<div style="left:960px;top:178px;width:1px;height:13px;background:#FFFFFF;"></div>
<div style="left:960px;top:191px;width:16px;height:1px;background:#404040;"></div>
<div style="left:975px;top:178px;width:1px;height:14px;background:#404040;"></div>
<div style="left:961px;top:190px;width:14px;height:1px;background:#808080;"></div>
<div style="left:974px;top:179px;width:1px;height:12px;background:#808080;"></div>
<div style="left:964px;top:187px;width:6px;height:2px;background:#000;"></div>
<div style="left:976px;top:178px;width:16px;height:14px;background:#D4D0C8;"></div>
<div style="left:976px;top:178px;width:15px;height:1px;background:#FFFFFF;"></div>
<div style="left:976px;top:178px;width:1px;height:13px;background:#FFFFFF;"></div>
<div style="left:976px;top:191px;width:16px;height:1px;background:#404040;"></div>
<div style="left:991px;top:178px;width:1px;height:14px;background:#404040;"></div>
<div style="left:977px;top:190px;width:14px;height:1px;background:#808080;"></div>
<div style="left:990px;top:179px;width:1px;height:12px;background:#808080;"></div>
<div style="left:979px;top:180px;width:9px;height:9px;border:1px solid #000;border-top-width:2px;box-sizing:border-box"></div>
<div style="left:994px;top:178px;width:16px;height:14px;background:#D4D0C8;"></div>
<div style="left:994px;top:178px;width:15px;height:1px;background:#FFFFFF;"></div>
<div style="left:994px;top:178px;width:1px;height:13px;background:#FFFFFF;"></div>
<div style="left:994px;top:191px;width:16px;height:1px;background:#404040;"></div>
<div style="left:1009px;top:178px;width:1px;height:14px;background:#404040;"></div>
<div style="left:995px;top:190px;width:14px;height:1px;background:#808080;"></div>
<div style="left:1008px;top:179px;width:1px;height:12px;background:#808080;"></div>
<svg style="left:997px;top:180px" width="10" height="9" viewBox="0 0 10 9"><path d="M1.3 1.3L8.7 8.2M8.7 1.3L1.3 8.2" stroke="#000" stroke-width="1.7"/></svg>
<div style="left:443px;top:195px;width:569px;height:1px;background:#808080;"></div>
<div style="left:443px;top:195px;width:1px;height:176px;background:#808080;"></div>
<div style="left:444px;top:196px;width:551px;height:35px;background:#FED545;"></div>
<div class="t" style="left:452px;top:208px;color:#000;font-size:12px;transform:scaleX(0.9255);transform-origin:0 0;">Перетащите заголовок колонки на эту панель для группировки по выбранному полю</div>
<div style="left:444px;top:231px;width:551px;height:1px;background:#000;"></div>
<div style="left:444px;top:232px;width:551px;height:17px;background:#316AC5;"></div>
<div style="left:444px;top:232px;width:1px;height:18px;background:#000;"></div>
<div style="left:455px;top:232px;width:2px;height:17px;background:#000;"></div>
<div style="left:444px;top:249px;width:551px;height:1px;background:#000;"></div>
<div class="t" style="left:462.15px;top:235px;color:#fff;font-size:12px;font-weight:bold;transform:scaleX(1.0613);transform-origin:0 0;">Дата контракта</div>
<div style="left:563px;top:234px;width:15px;height:13px;background:#D4D0C8;box-shadow: inset 0 0 0 1px #8A8680;"></div>
<svg style="left:567px;top:239px" width="7" height="4" viewBox="0 0 7 4" shape-rendering="crispEdges"><path d="M0 0h7v1h-1v1h-1v1h-1v1h-1v-1h-1v-1h-1v-1h-1z" fill="#000"/></svg>
<div style="left:580px;top:232px;width:1px;height:17px;background:#000;"></div>
<div class="t" style="left:662.19px;top:235px;color:#fff;font-size:12px;font-weight:bold;transform:scaleX(1.0089);transform-origin:0 0;">Клиент</div>
<div style="left:789px;top:234px;width:15px;height:13px;background:#D4D0C8;box-shadow: inset 0 0 0 1px #8A8680;"></div>
<svg style="left:793px;top:239px" width="7" height="4" viewBox="0 0 7 4" shape-rendering="crispEdges"><path d="M0 0h7v1h-1v1h-1v1h-1v1h-1v-1h-1v-1h-1v-1h-1z" fill="#000"/></svg>
<div style="left:806px;top:232px;width:1px;height:17px;background:#000;"></div>
<div class="t" style="left:810.16px;top:235px;color:#fff;font-size:12px;font-weight:bold;transform:scaleX(1.0528);transform-origin:0 0;">Вн. код</div>
<svg style="left:865px;top:237px" width="8" height="7" viewBox="0 0 8 7"><path d="M4 0.5L7.5 6.5H0.5z" stroke="#8095B8" fill="none" stroke-width="1"/></svg>
<div style="left:876px;top:234px;width:15px;height:13px;background:#D4D0C8;box-shadow: inset 0 0 0 1px #8A8680;"></div>
<svg style="left:880px;top:239px" width="7" height="4" viewBox="0 0 7 4" shape-rendering="crispEdges"><path d="M0 0h7v1h-1v1h-1v1h-1v1h-1v-1h-1v-1h-1v-1h-1z" fill="#000"/></svg>
<div style="left:893px;top:232px;width:1px;height:17px;background:#000;"></div>
<div class="t" style="left:896.18px;top:235px;color:#fff;font-size:12px;font-weight:bold;transform:scaleX(1.0251);transform-origin:0 0;">Дата окончания</div>
<div style="left:992px;top:234px;width:15px;height:13px;background:#D4D0C8;"></div>
<div style="left:992px;top:234px;width:14px;height:1px;background:#FFFFFF;"></div>
<div style="left:992px;top:234px;width:1px;height:12px;background:#FFFFFF;"></div>
<div style="left:992px;top:246px;width:15px;height:1px;background:#404040;"></div>
<div style="left:1006px;top:234px;width:1px;height:13px;background:#404040;"></div>
<div style="left:993px;top:245px;width:13px;height:1px;background:#808080;"></div>
<div style="left:1005px;top:235px;width:1px;height:11px;background:#808080;"></div>
<div style="left:445px;top:250px;width:10px;height:17px;background:#A4C4EA;"></div>
<div style="left:444px;top:250px;width:1px;height:18px;background:#000;"></div>
<div style="left:455px;top:250px;width:1px;height:17px;background:#000;"></div>
<div style="left:456px;top:250px;width:124px;height:17px;background:#C2DDC2;"></div>
<div style="left:581px;top:250px;width:225px;height:17px;background:#C2DDC2;"></div>
<div style="left:807px;top:250px;width:86px;height:17px;background:#C2DDC2;"></div>
<div style="left:894px;top:250px;width:101px;height:17px;background:#C2DDC2;"></div>
<div style="left:580px;top:250px;width:1px;height:17px;background:#808080;"></div>
<div style="left:806px;top:250px;width:1px;height:17px;background:#808080;"></div>
<div style="left:893px;top:250px;width:1px;height:17px;background:#808080;"></div>
<div style="left:444px;top:267px;width:551px;height:1px;background:#808080;"></div>
<div style="left:444px;top:267px;width:12px;height:1px;background:#000;"></div>
<div class="t" style="left:459px;top:253px;color:#000;font-size:12px;transform:scaleX(0.917);transform-origin:0 0;">01.01.2007</div>
<div class="t" style="left:583px;top:253px;color:#000;font-size:12px;transform:scaleX(0.917);transform-origin:0 0;">клиент 2</div>
<div class="t" style="left:842.93px;top:253px;color:#000;font-size:12px;transform:scaleX(0.917);transform-origin:100% 0;width:49.07px;text-align:right;">4</div>
<div class="t" style="left:896px;top:253px;color:#000;font-size:12px;transform:scaleX(0.917);transform-origin:0 0;"></div>
<div style="left:445px;top:268px;width:10px;height:17px;background:#A4C4EA;"></div>
<div style="left:444px;top:268px;width:1px;height:18px;background:#000;"></div>
<div style="left:455px;top:268px;width:1px;height:17px;background:#000;"></div>
<div style="left:456px;top:268px;width:124px;height:17px;background:#A4C4EA;"></div>
<div style="left:581px;top:268px;width:225px;height:17px;background:#D8E8F6;"></div>
<div style="left:807px;top:268px;width:86px;height:17px;background:#A4C4EA;"></div>
<div style="left:894px;top:268px;width:101px;height:17px;background:#A4C4EA;"></div>
<div style="left:580px;top:268px;width:1px;height:17px;background:#808080;"></div>
<div style="left:806px;top:268px;width:1px;height:17px;background:#808080;"></div>
<div style="left:893px;top:268px;width:1px;height:17px;background:#808080;"></div>
<div style="left:444px;top:285px;width:551px;height:1px;background:#808080;"></div>
<div style="left:444px;top:285px;width:12px;height:1px;background:#000;"></div>
<div class="t" style="left:459px;top:271px;color:#000;font-size:12px;transform:scaleX(0.917);transform-origin:0 0;">01.01.2001</div>
<div class="t" style="left:583px;top:271px;color:#000;font-size:12px;transform:scaleX(0.917);transform-origin:0 0;">клиент 3</div>
<div class="t" style="left:842.93px;top:271px;color:#000;font-size:12px;transform:scaleX(0.917);transform-origin:100% 0;width:49.07px;text-align:right;">5</div>
<div class="t" style="left:896px;top:271px;color:#000;font-size:12px;transform:scaleX(0.917);transform-origin:0 0;">31.12.2009</div>
<div style="left:445px;top:286px;width:10px;height:17px;background:#A4C4EA;"></div>
<div style="left:444px;top:286px;width:1px;height:18px;background:#000;"></div>
<div style="left:455px;top:286px;width:1px;height:17px;background:#000;"></div>
<div style="left:456px;top:286px;width:124px;height:17px;background:#C2DDC2;"></div>
<div style="left:581px;top:286px;width:225px;height:17px;background:#C2DDC2;"></div>
<div style="left:807px;top:286px;width:86px;height:17px;background:#C2DDC2;"></div>
<div style="left:894px;top:286px;width:101px;height:17px;background:#C2DDC2;"></div>
<div style="left:580px;top:286px;width:1px;height:17px;background:#808080;"></div>
<div style="left:806px;top:286px;width:1px;height:17px;background:#808080;"></div>
<div style="left:893px;top:286px;width:1px;height:17px;background:#808080;"></div>
<div style="left:444px;top:303px;width:551px;height:1px;background:#808080;"></div>
<div style="left:444px;top:303px;width:12px;height:1px;background:#000;"></div>
<div class="t" style="left:459px;top:289px;color:#000;font-size:12px;transform:scaleX(0.917);transform-origin:0 0;">01.01.2005</div>
<div class="t" style="left:583px;top:289px;color:#000;font-size:12px;transform:scaleX(0.917);transform-origin:0 0;">клиент 10</div>
<div class="t" style="left:842.93px;top:289px;color:#000;font-size:12px;transform:scaleX(0.917);transform-origin:100% 0;width:49.07px;text-align:right;">12</div>
<div class="t" style="left:896px;top:289px;color:#000;font-size:12px;transform:scaleX(0.917);transform-origin:0 0;"></div>
<div style="left:444px;top:303px;width:12px;height:1px;background:#000;"></div>
<svg style="left:447px;top:272px" width="5" height="9" viewBox="0 0 5 9"><path d="M0.5 0.5L4.5 4.5L0.5 8.5z" stroke="#000" fill="none" stroke-width="1"/></svg>
<div style="left:444px;top:304px;width:551px;height:11px;background:#A4C4EA;"></div>
<div style="left:444px;top:315px;width:551px;height:1px;background:#808080;"></div>
<div style="left:444px;top:316px;width:11px;height:23px;background:#A4C4EA;"></div>
<div style="left:455px;top:316px;width:1px;height:23px;background:#808080;"></div>
<div style="left:456px;top:316px;width:539px;height:23px;background:#FFFFE4;"></div>
<div style="left:583px;top:318px;width:222px;height:19px;background:#FFFFE4;box-shadow: inset 0 0 0 1px #808080;"></div>
<div class="t" style="left:586.19px;top:322px;color:#000080;font-size:12px;font-weight:bold;transform:scaleX(1.0166);transform-origin:0 0;">Количество строк: 4</div>
<div style="left:444px;top:339px;width:551px;height:1px;background:#808080;"></div>
<div style="left:444px;top:340px;width:551px;height:31px;background:#FFFFE4;"></div>
<div style="left:448px;top:348px;width:16px;height:15px;background:#D4D0C8;box-shadow: inset 0 0 0 1px #000;"></div>
<svg style="left:451.5px;top:351.5px" width="9" height="8" viewBox="0 0 9 8"><path d="M0.8 0.8L7.8 7.2M7.8 0.8L0.8 7.2" stroke="#000" stroke-width="1.7"/></svg>
<div style="left:468px;top:349px;width:13px;height:13px;background:#fff;box-shadow: inset 0 0 0 1px #000;"></div>
<svg style="left:470px;top:351px" width="9" height="9" viewBox="0 0 9 9"><path d="M1.2 3.6L3.6 6.8L7.6 1" stroke="#000" stroke-width="2" fill="none"/></svg>
<div class="t" style="left:490px;top:350px;color:#000;font-size:12px;transform:scaleX(0.917);transform-origin:0 0;">(Свободная сумма контракта по платежам &lt;&gt; 0)</div>
<div style="left:917px;top:344px;width:74px;height:23px;background:#D4D0C8;box-shadow: inset 0 0 0 1px #000, inset 0 0 0 2px #E4E2DC;"></div>
<div class="t" style="left:922px;top:349px;color:#000;font-size:12px;transform:scaleX(0.917);transform-origin:0 0;">Настройка...</div>
<div style="left:995px;top:195px;width:16px;height:176px;background:#D4D0C8;"></div>
<div style="left:995px;top:196px;width:16px;height:16px;background:#D4D0C8;box-shadow: inset 0 0 0 1px #000;"></div>
<svg style="left:999px;top:202px" width="7" height="4" viewBox="0 0 7 4" shape-rendering="crispEdges"><path d="M3 0h1v1h1v1h1v1h1v1h-7v-1h1v-1h1v-1h1z" fill="#000"/></svg>
<div style="left:995px;top:212px;width:16px;height:36px;background:#fff;background-image:repeating-conic-gradient(#D4D0C8 0 25%, #fff 0 50%);background-size:2px 2px;"></div>
<div style="left:995px;top:248px;width:16px;height:107px;background:#D4D0C8;box-shadow: inset 0 0 0 1px #000;"></div>
<div style="left:995px;top:355px;width:16px;height:16px;background:#D4D0C8;box-shadow: inset 0 0 0 1px #000;"></div>
<svg style="left:999px;top:361px" width="7" height="4" viewBox="0 0 7 4" shape-rendering="crispEdges"><path d="M0 0h7v1h-1v1h-1v1h-1v1h-1v-1h-1v-1h-1v-1h-1z" fill="#000"/></svg>
<div style="left:443px;top:371px;width:552px;height:16px;background:#D4D0C8;"></div>
<div style="left:444px;top:371px;width:16px;height:16px;background:#D4D0C8;box-shadow: inset 0 0 0 1px #000;"></div>
<div style="left:459px;top:371px;width:96px;height:16px;background:#D4D0C8;box-shadow: inset 0 0 0 1px #000;"></div>
<div style="left:459px;top:372px;width:2px;height:14px;background:#000;"></div>
<div style="left:555px;top:372px;width:424px;height:14px;background:#fff;background-image:repeating-conic-gradient(#D4D0C8 0 25%, #fff 0 50%);background-size:2px 2px;"></div>
<div style="left:979px;top:371px;width:16px;height:16px;background:#D4D0C8;box-shadow: inset 0 0 0 1px #000;"></div>
<svg style="left:985px;top:375px" width="4" height="7" viewBox="0 0 4 7" shape-rendering="crispEdges"><path d="M0 0v7h1v-1h1v-1h1v-1h1v-1h-1v-1h-1v-1h-1v-1z" fill="#000"/></svg>
<div style="left:995px;top:371px;width:16px;height:16px;background:#D4D0C8;"></div>
<div style="left:1011px;top:195px;width:1px;height:193px;background:#808080;"></div>
<div style="left:443px;top:387px;width:569px;height:1px;background:#808080;"></div>
<div style="left:84px;top:377px;width:758px;height:300px;background:#D4D0C8;"></div>
<div style="left:85px;top:378px;width:755px;height:1px;background:#FFFFFF;"></div>
<div style="left:85px;top:378px;width:1px;height:297px;background:#FFFFFF;"></div>
<div style="left:84px;top:676px;width:758px;height:1px;background:#404040;"></div>
<div style="left:841px;top:377px;width:1px;height:300px;background:#404040;"></div>
<div style="left:85px;top:675px;width:756px;height:1px;background:#808080;"></div>
<div style="left:840px;top:378px;width:1px;height:298px;background:#808080;"></div>
<div style="left:88px;top:381px;width:750px;height:18px;background:linear-gradient(to right,#0A246A,#A6CAF0);"></div>
<svg style="left:90px;top:382px" width="16" height="16" viewBox="0 0 16 16" shape-rendering="crispEdges"><rect x="0" y="0" width="8" height="1" fill="#F0F060"/><rect x="8" y="0" width="8" height="1" fill="#FFFFFF"/><rect x="0" y="1" width="1" height="1" fill="#F0F060"/><rect x="1" y="1" width="2" height="1" fill="#1010F8"/><rect x="3" y="1" width="1" height="1" fill="#A0A0A0"/><rect x="4" y="1" width="2" height="1" fill="#1010F8"/><rect x="6" y="1" width="2" height="1" fill="#A0A0A0"/><rect x="8" y="1" width="8" height="1" fill="#FFFFFF"/><rect x="0" y="2" width="1" height="1" fill="#F0F060"/><rect x="1" y="2" width="3" height="1" fill="#A0A0A0"/><rect x="4" y="2" width="1" height="1" fill="#A09A18"/><rect x="5" y="2" width="3" height="1" fill="#A0A0A0"/><rect x="8" y="2" width="3" height="1" fill="#0000A8"/><rect x="11" y="2" width="5" height="1" fill="#FFFFFF"/><rect x="0" y="3" width="1" height="1" fill="#F0F060"/><rect x="1" y="3" width="2" height="1" fill="#A0A0A0"/><rect x="3" y="3" width="2" height="1" fill="#A09A18"/><rect x="5" y="3" width="2" height="1" fill="#A0A0A0"/><rect x="7" y="3" width="2" height="1" fill="#0000A8"/><rect x="9" y="3" width="2" height="1" fill="#1010F8"/><rect x="11" y="3" width="2" height="1" fill="#A09A18"/><rect x="13" y="3" width="3" height="1" fill="#FFFFFF"/><rect x="0" y="4" width="1" height="1" fill="#F0F060"/><rect x="1" y="4" width="1" height="1" fill="#A0A0A0"/><rect x="2" y="4" width="3" height="1" fill="#A09A18"/><rect x="5" y="4" width="1" height="1" fill="#A0A0A0"/><rect x="6" y="4" width="1" height="1" fill="#0000A8"/><rect x="7" y="4" width="5" height="1" fill="#1010F8"/><rect x="12" y="4" width="1" height="1" fill="#A09A18"/><rect x="13" y="4" width="3" height="1" fill="#FFFFFF"/><rect x="0" y="5" width="1" height="1" fill="#F0F060"/><rect x="1" y="5" width="4" height="1" fill="#A0A0A0"/><rect x="5" y="5" width="1" height="1" fill="#0000A8"/><rect x="6" y="5" width="8" height="1" fill="#1010F8"/><rect x="14" y="5" width="2" height="1" fill="#FFFFFF"/><rect x="0" y="6" width="1" height="1" fill="#F0F060"/><rect x="1" y="6" width="2" height="1" fill="#1010F8"/><rect x="3" y="6" width="1" height="1" fill="#A0A0A0"/><rect x="4" y="6" width="8" height="1" fill="#1010F8"/><rect x="12" y="6" width="3" height="1" fill="#A09A18"/><rect x="15" y="6" width="1" height="1" fill="#FFFFFF"/><rect x="0" y="7" width="1" height="1" fill="#F0F060"/><rect x="1" y="7" width="2" height="1" fill="#1010F8"/><rect x="3" y="7" width="1" height="1" fill="#A0A0A0"/><rect x="4" y="7" width="8" height="1" fill="#1010F8"/><rect x="12" y="7" width="3" height="1" fill="#A09A18"/><rect x="15" y="7" width="1" height="1" fill="#FFFFFF"/><rect x="0" y="8" width="1" height="1" fill="#FFFFFF"/><rect x="1" y="8" width="1" height="1" fill="#0000A8"/><rect x="2" y="8" width="2" height="1" fill="#A0A0A0"/><rect x="4" y="8" width="1" height="1" fill="#1010F8"/><rect x="5" y="8" width="2" height="1" fill="#A09A18"/><rect x="7" y="8" width="6" height="1" fill="#1010F8"/><rect x="13" y="8" width="2" height="1" fill="#A09A18"/><rect x="15" y="8" width="1" height="1" fill="#FFFFFF"/><rect x="0" y="9" width="1" height="1" fill="#FFFFFF"/><rect x="1" y="9" width="2" height="1" fill="#0000A8"/><rect x="3" y="9" width="2" height="1" fill="#1010F8"/><rect x="5" y="9" width="3" height="1" fill="#A09A18"/><rect x="8" y="9" width="5" height="1" fill="#1010F8"/><rect x="13" y="9" width="2" height="1" fill="#A09A18"/><rect x="15" y="9" width="1" height="1" fill="#C8C8C8"/><rect x="0" y="10" width="1" height="1" fill="#FFFFFF"/><rect x="1" y="10" width="2" height="1" fill="#0000A8"/><rect x="3" y="10" width="3" height="1" fill="#1010F8"/><rect x="6" y="10" width="2" height="1" fill="#A09A18"/><rect x="8" y="10" width="7" height="1" fill="#1010F8"/><rect x="15" y="10" width="1" height="1" fill="#C8C8C8"/><rect x="0" y="11" width="1" height="1" fill="#FFFFFF"/><rect x="1" y="11" width="3" height="1" fill="#0000A8"/><rect x="4" y="11" width="2" height="1" fill="#1010F8"/><rect x="6" y="11" width="2" height="1" fill="#A09A18"/><rect x="8" y="11" width="6" height="1" fill="#1010F8"/><rect x="14" y="11" width="2" height="1" fill="#C8C8C8"/><rect x="0" y="12" width="2" height="1" fill="#FFFFFF"/><rect x="2" y="12" width="3" height="1" fill="#0000A8"/><rect x="5" y="12" width="2" height="1" fill="#1010F8"/><rect x="7" y="12" width="1" height="1" fill="#A09A18"/><rect x="8" y="12" width="6" height="1" fill="#1010F8"/><rect x="14" y="12" width="2" height="1" fill="#C8C8C8"/><rect x="0" y="13" width="3" height="1" fill="#FFFFFF"/><rect x="3" y="13" width="4" height="1" fill="#0000A8"/><rect x="7" y="13" width="1" height="1" fill="#A09A18"/><rect x="8" y="13" width="5" height="1" fill="#1010F8"/><rect x="13" y="13" width="3" height="1" fill="#C8C8C8"/><rect x="0" y="14" width="4" height="1" fill="#FFFFFF"/><rect x="4" y="14" width="5" height="1" fill="#0000A8"/><rect x="9" y="14" width="3" height="1" fill="#1010F8"/><rect x="12" y="14" width="3" height="1" fill="#C8C8C8"/><rect x="15" y="14" width="1" height="1" fill="#FFFFFF"/><rect x="0" y="15" width="6" height="1" fill="#FFFFFF"/><rect x="6" y="15" width="4" height="1" fill="#0000A8"/><rect x="10" y="15" width="3" height="1" fill="#C8C8C8"/><rect x="13" y="15" width="3" height="1" fill="#FFFFFF"/></svg>
<div class="t" style="left:107.1px;top:384px;color:#FFFFFF;font-weight:bold;transform:scaleX(1.1201);transform-origin:0 0;">Платежи других банков (экспортные)</div>
<div style="left:786px;top:383px;width:16px;height:14px;background:#D4D0C8;"></div>
<div style="left:786px;top:383px;width:15px;height:1px;background:#FFFFFF;"></div>
<div style="left:786px;top:383px;width:1px;height:13px;background:#FFFFFF;"></div>
<div style="left:786px;top:396px;width:16px;height:1px;background:#404040;"></div>
<div style="left:801px;top:383px;width:1px;height:14px;background:#404040;"></div>
<div style="left:787px;top:395px;width:14px;height:1px;background:#808080;"></div>
<div style="left:800px;top:384px;width:1px;height:12px;background:#808080;"></div>
<div style="left:790px;top:392px;width:6px;height:2px;background:#000;"></div>
<div style="left:802px;top:383px;width:16px;height:14px;background:#D4D0C8;"></div>
<div style="left:802px;top:383px;width:15px;height:1px;background:#FFFFFF;"></div>
<div style="left:802px;top:383px;width:1px;height:13px;background:#FFFFFF;"></div>
<div style="left:802px;top:396px;width:16px;height:1px;background:#404040;"></div>
<div style="left:817px;top:383px;width:1px;height:14px;background:#404040;"></div>
<div style="left:803px;top:395px;width:14px;height:1px;background:#808080;"></div>
<div style="left:816px;top:384px;width:1px;height:12px;background:#808080;"></div>
<div style="left:805px;top:385px;width:9px;height:9px;border:1px solid #000;border-top-width:2px;box-sizing:border-box"></div>
<div style="left:820px;top:383px;width:16px;height:14px;background:#D4D0C8;"></div>
<div style="left:820px;top:383px;width:15px;height:1px;background:#FFFFFF;"></div>
<div style="left:820px;top:383px;width:1px;height:13px;background:#FFFFFF;"></div>
<div style="left:820px;top:396px;width:16px;height:1px;background:#404040;"></div>
<div style="left:835px;top:383px;width:1px;height:14px;background:#404040;"></div>
<div style="left:821px;top:395px;width:14px;height:1px;background:#808080;"></div>
<div style="left:834px;top:384px;width:1px;height:12px;background:#808080;"></div>
<svg style="left:823px;top:385px" width="10" height="9" viewBox="0 0 10 9"><path d="M1.3 1.3L8.7 8.2M8.7 1.3L1.3 8.2" stroke="#000" stroke-width="1.7"/></svg>
<div style="left:88px;top:400px;width:750px;height:1px;background:#808080;"></div>
<div style="left:88px;top:400px;width:1px;height:260px;background:#808080;"></div>
<div style="left:89px;top:401px;width:748px;height:35px;background:#FED545;"></div>
<div class="t" style="left:97px;top:413px;color:#000;font-size:12px;transform:scaleX(0.9255);transform-origin:0 0;">Перетащите заголовок колонки на эту панель для группировки по выбранному полю</div>
<div style="left:89px;top:436px;width:748px;height:1px;background:#000;"></div>
<div style="left:89px;top:437px;width:748px;height:17px;background:#316AC5;"></div>
<div style="left:89px;top:437px;width:1px;height:54px;background:#000;"></div>
<div style="left:100px;top:437px;width:2px;height:17px;background:#000;"></div>
<div style="left:89px;top:454px;width:748px;height:1px;background:#000;"></div>
<div class="t" style="left:117.18px;top:440px;color:#fff;font-size:12px;font-weight:bold;transform:scaleX(1.0296);transform-origin:0 0;">Вн. код</div>
<div style="left:178px;top:439px;width:15px;height:13px;background:#D4D0C8;box-shadow: inset 0 0 0 1px #8A8680;"></div>
<svg style="left:182px;top:444px" width="7" height="4" viewBox="0 0 7 4" shape-rendering="crispEdges"><path d="M0 0h7v1h-1v1h-1v1h-1v1h-1v-1h-1v-1h-1v-1h-1z" fill="#000"/></svg>
<div style="left:195px;top:437px;width:1px;height:17px;background:#000;"></div>
<div class="t" style="left:269.19px;top:440px;color:#fff;font-size:12px;font-weight:bold;transform:scaleX(1.0089);transform-origin:0 0;">Клиент</div>
<div style="left:387px;top:439px;width:15px;height:13px;background:#D4D0C8;box-shadow: inset 0 0 0 1px #8A8680;"></div>
<svg style="left:391px;top:444px" width="7" height="4" viewBox="0 0 7 4" shape-rendering="crispEdges"><path d="M0 0h7v1h-1v1h-1v1h-1v1h-1v-1h-1v-1h-1v-1h-1z" fill="#000"/></svg>
<div style="left:404px;top:437px;width:1px;height:17px;background:#000;"></div>
<div class="t" style="left:426.16px;top:440px;color:#fff;font-size:12px;font-weight:bold;transform:scaleX(1.0513);transform-origin:0 0;">Дата платежа</div>
<div style="left:533px;top:439px;width:15px;height:13px;background:#D4D0C8;box-shadow: inset 0 0 0 1px #8A8680;"></div>
<svg style="left:537px;top:444px" width="7" height="4" viewBox="0 0 7 4" shape-rendering="crispEdges"><path d="M0 0h7v1h-1v1h-1v1h-1v1h-1v-1h-1v-1h-1v-1h-1z" fill="#000"/></svg>
<div style="left:550px;top:437px;width:1px;height:17px;background:#000;"></div>
<div class="t" style="left:564.18px;top:440px;color:#fff;font-size:12px;font-weight:bold;transform:scaleX(1.0312);transform-origin:0 0;">МФО</div>
<div style="left:609px;top:439px;width:15px;height:13px;background:#D4D0C8;box-shadow: inset 0 0 0 1px #8A8680;"></div>
<svg style="left:613px;top:444px" width="7" height="4" viewBox="0 0 7 4" shape-rendering="crispEdges"><path d="M0 0h7v1h-1v1h-1v1h-1v1h-1v-1h-1v-1h-1v-1h-1z" fill="#000"/></svg>
<div style="left:626px;top:437px;width:1px;height:17px;background:#000;"></div>
<div class="t" style="left:685.17px;top:440px;color:#fff;font-size:12px;font-weight:bold;transform:scaleX(1.0372);transform-origin:0 0;">Название банка</div>
<div style="left:90px;top:455px;width:10px;height:17px;background:#A4C4EA;"></div>
<div style="left:100px;top:455px;width:1px;height:17px;background:#000;"></div>
<div style="left:101px;top:455px;width:736px;height:17px;background:#D8E8F6;"></div>
<div style="left:195px;top:455px;width:1px;height:17px;background:#808080;"></div>
<div style="left:404px;top:455px;width:1px;height:17px;background:#808080;"></div>
<div style="left:550px;top:455px;width:1px;height:17px;background:#808080;"></div>
<div style="left:626px;top:455px;width:1px;height:17px;background:#808080;"></div>
<div style="left:89px;top:472px;width:748px;height:1px;background:#808080;"></div>
<div style="left:89px;top:472px;width:12px;height:1px;background:#000;"></div>
<div class="t" style="left:143.84px;top:458px;color:#000;font-size:12px;transform:scaleX(0.917);transform-origin:100% 0;width:50.16px;text-align:right;">80</div>
<div class="t" style="left:199px;top:458px;color:#000;font-size:12px;transform:scaleX(0.917);transform-origin:0 0;">Тест К. П. - UC319</div>
<div class="t" style="left:407px;top:458px;color:#000;font-size:12px;transform:scaleX(0.917);transform-origin:0 0;">18.06.2009</div>
<div class="t" style="left:566.02px;top:458px;color:#000;font-size:12px;transform:scaleX(0.917);transform-origin:100% 0;width:59.98px;text-align:right;">305200</div>
<div class="t" style="left:629px;top:458px;color:#000;font-size:12px;transform:scaleX(0.9555);transform-origin:0 0;">Ф-я АПБ "УКРАЇНА" смт.Софіївка</div>
<div style="left:90px;top:473px;width:10px;height:17px;background:#A4C4EA;"></div>
<div style="left:100px;top:473px;width:1px;height:17px;background:#000;"></div>
<div style="left:101px;top:473px;width:736px;height:17px;background:#D8E8F6;"></div>
<div style="left:195px;top:473px;width:1px;height:17px;background:#808080;"></div>
<div style="left:404px;top:473px;width:1px;height:17px;background:#808080;"></div>
<div style="left:550px;top:473px;width:1px;height:17px;background:#808080;"></div>
<div style="left:626px;top:473px;width:1px;height:17px;background:#808080;"></div>
<div style="left:89px;top:490px;width:748px;height:1px;background:#808080;"></div>
<div style="left:89px;top:490px;width:12px;height:1px;background:#000;"></div>
<div class="t" style="left:143.84px;top:476px;color:#000;font-size:12px;transform:scaleX(0.917);transform-origin:100% 0;width:50.16px;text-align:right;">80</div>
<div class="t" style="left:199px;top:476px;color:#000;font-size:12px;transform:scaleX(0.917);transform-origin:0 0;">Тест К. П. - UC319</div>
<div class="t" style="left:407px;top:476px;color:#000;font-size:12px;transform:scaleX(0.917);transform-origin:0 0;">01.06.2001</div>
<div class="t" style="left:566.02px;top:476px;color:#000;font-size:12px;transform:scaleX(0.917);transform-origin:100% 0;width:59.98px;text-align:right;">305200</div>
<div class="t" style="left:629px;top:476px;color:#000;font-size:12px;transform:scaleX(0.9555);transform-origin:0 0;">Ф-я АПБ "УКРАЇНА" смт.Софіївка</div>
<div style="left:89px;top:490px;width:12px;height:1px;background:#000;"></div>
<div style="left:101px;top:455px;width:736px;height:17px;border:1px dotted #000;box-sizing:border-box"></div>
<svg style="left:92px;top:459px" width="5" height="9" viewBox="0 0 5 9" shape-rendering="crispEdges"><path d="M0 0v9h1v-1h1v-1h1v-1h1v-1h1v-1h-1v-1h-1v-1h-1v-1h-1v-1z" fill="#000"/></svg>
<div style="left:89px;top:491px;width:748px;height:200px;background:#A4C4EA;"></div>
</div>
</body></html>
